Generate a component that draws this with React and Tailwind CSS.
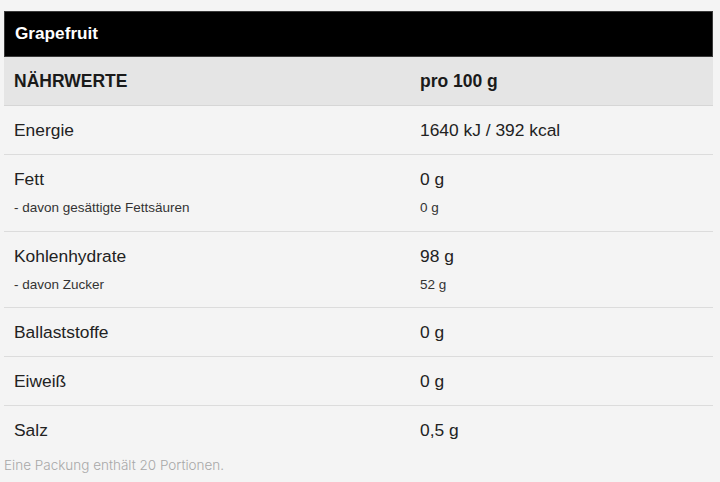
export default function App() {
  const font = { fontFamily: '"Liberation Sans", Arial, sans-serif' };
  const rows = [
    { name: "Energie", val: "1640 kJ / 392 kcal" },
    { name: "Fett", val: "0 g", sub: "- davon gesättigte Fettsäuren", subVal: "0 g", pad: "pt-[14px] pb-[15px] " },
    { name: "Kohlenhydrate", val: "98 g", sub: "- davon Zucker", subVal: "52 g", pad: "pt-[14px] pb-[14px] " },
    { name: "Ballaststoffe", val: "0 g" },
    { name: "Eiweiß", val: "0 g" },
    { name: "Salz", val: "0,5 g", last: true },
  ];
  return (
    <div className="w-[720px] h-[482px] bg-[#f4f4f4] pt-[11px] overflow-hidden" style={font}>
      <div className="ml-[4px] w-[709px]">
        <div className="h-[46px] bg-black border border-[#3a3a3a] flex items-center pl-[10px] text-white font-bold text-[17.2px]">
          Grapefruit
        </div>
        <div className="h-[49px] bg-[#e5e5e5] border-b border-[#d6d6d6] grid grid-cols-[406px_1fr] items-center pl-[10px] text-[#1a1a1a] font-bold text-[17.5px]">
          <div>NÄHRWERTE</div>
          <div>pro 100 g</div>
        </div>
        {rows.map((r) => (
          <div
            key={r.name}
            className={
              (r.last ? "h-[47px] flex items-center " : "border-b border-[#dcdcdc] ") +
              (r.sub ? r.pad : r.last ? "" : "h-[49px] flex items-center ") +
              "pl-[10px] text-[#222]"
            }
          >
            <div className="w-full">
              <div className="grid grid-cols-[406px_1fr] text-[17.4px] leading-[20px]">
                <div>{r.name}</div>
                <div>{r.val}</div>
              </div>
              {r.sub && (
                <div className="grid grid-cols-[406px_1fr] text-[13.5px] leading-[16px] mt-[11px] text-[#333]">
                  <div>{r.sub}</div>
                  <div>{r.subVal}</div>
                </div>
              )}
            </div>
          </div>
        ))}
      </div>
      <div
        className="pl-[4px] mt-[2px] text-[13.5px] text-[#a8a8a8] font-light"
        style={{ fontFamily: 'Inter, "Noto Sans", sans-serif' }}
      >
        Eine Packung enthält 20 Portionen.
      </div>
    </div>
  );
}
